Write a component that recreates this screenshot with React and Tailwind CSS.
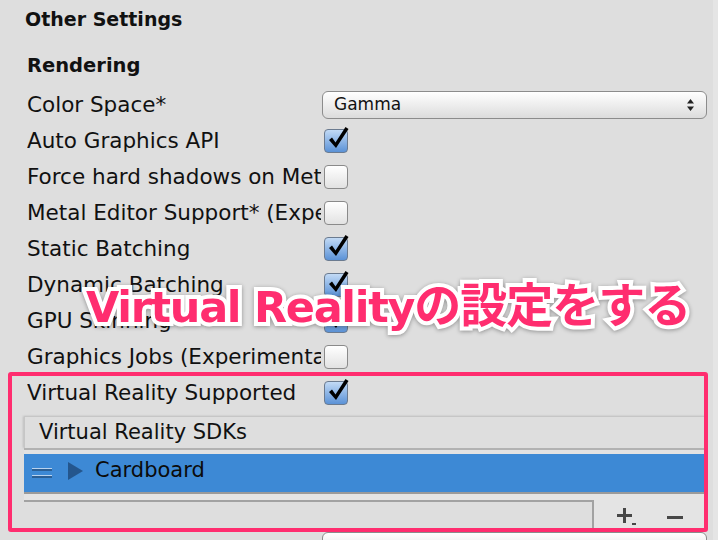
import React from 'react'

const rows = [
  { label: 'Auto Graphics API', checked: true },
  { label: 'Force hard shadows on Metal', checked: false },
  { label: 'Metal Editor Support* (Experimental)', checked: false },
  { label: 'Static Batching', checked: true },
  { label: 'Dynamic Batching', checked: true },
  { label: 'GPU Skinning', checked: true },
  { label: 'Graphics Jobs (Experimental)', checked: false },
  { label: 'Virtual Reality Supported', checked: true },
]

function Checkbox({ checked }) {
  return (
    <div className="relative ml-[3px] h-[24px] w-[24px] shrink-0">
      <div
        className={
          checked
            ? 'h-full w-full rounded-[4px] border border-[#6b7b90] bg-gradient-to-b from-[#c2daf5] to-[#5b92d6]'
            : 'h-full w-full rounded-[4px] border border-[#8a8a8a] bg-gradient-to-b from-[#ffffff] to-[#e2e2e2]'
        }
      />
      {checked && (
        <svg className="absolute -top-[3px] left-[3px]" width="22" height="24" viewBox="0 0 22 24">
          <path d="M2 14 L5 11.5 L8.5 16.5 L18.5 1 L21.5 3 L9 22 Z" fill="#000" />
        </svg>
      )}
    </div>
  )
}

function Row({ label, children }) {
  return (
    <div className="flex h-[36px] items-center pl-[27px]">
      <div className="w-[294px] shrink-0 overflow-hidden whitespace-nowrap text-[21.5px] leading-none">{label}</div>
      {children}
    </div>
  )
}

function Dropdown({ value }) {
  return (
    <div className="ml-[1px] flex h-[28px] w-[385px] shrink-0 items-center justify-between rounded-[6px] border border-[#8c8c8c] bg-gradient-to-b from-[#ffffff] to-[#dcdcdc] pl-[11px] pr-[12px] text-[17px]">
      <span>{value}</span>
      <svg width="7" height="12" viewBox="0 0 7 12">
        <path d="M3.5 0 L7 4.5 L0 4.5 Z M3.5 12 L7 7.5 L0 7.5 Z" fill="#222" />
      </svg>
    </div>
  )
}

export default function App() {
  return (
    <div className="relative h-[540px] w-[718px] overflow-hidden bg-[#dedede] font-['DejaVu_Sans',sans-serif] text-[#111]">
      <div className="flex h-full">
        <div className="w-[713px]">
          <div className="flex h-[38px] items-center pl-[25px] text-[19px] font-bold">Other Settings</div>
          <div className="mt-[11px] flex h-[34px] items-center pl-[27px] text-[19.5px] font-bold">Rendering</div>

          <div className="mt-[4px]">
            <Row label="Color Space*">
              <Dropdown value="Gamma" />
            </Row>
            {rows.map(r => (
              <Row key={r.label} label={r.label}>
                <Checkbox checked={r.checked} />
              </Row>
            ))}
          </div>

          {/* reorderable list */}
          <div className="ml-[24px] mt-[5px] w-[682px]">
            <div className="flex h-[32px] items-center border-l border-t border-[#c6c6c6] bg-[#dedede] pl-[14px] text-[21px] shadow-[-1px_0_2px_rgba(0,0,0,0.15)]">
              Virtual Reality SDKs
            </div>
            <div className="h-[2px] bg-[#b2b2b2]" />
            <div className="h-[4px] bg-[#e2e2e2]" />
            <div className="flex h-[38px] items-center bg-[#3d89d5] pb-[4px]">
              <div className="ml-[8px] mt-[4px] flex w-[20px] flex-col gap-[4px]">
                <div className="h-[3px] border-t border-[#b9d3ef] bg-[#2b5f95]" />
                <div className="h-[3px] border-t border-[#b9d3ef] bg-[#2b5f95]" />
              </div>
              <svg className="ml-[16px]" width="15" height="18" viewBox="0 0 15 18">
                <path d="M0 0 L15 9 L0 18 Z" fill="#24568d" />
              </svg>
              <span className="ml-[12px] text-[21px] text-[#0b0b0b]">Cardboard</span>
            </div>
            <div className="h-[2px] bg-[#9a9a9a]" />
            <div className="h-[6px] bg-[#e4e4e4]" />
            <div className="flex h-[28px]">
              <div className="h-full w-[570px] border-r-2 border-t-2 border-[#a2a2a2] bg-[#dedede]" />
              <div className="flex flex-1 items-start gap-[30px] bg-[#e4e4e4] pl-[23px] pt-[8px]">
                <svg width="20" height="18" viewBox="0 0 20 18">
                  <path d="M6 0 H9 V6 H15 V9 H9 V15 H6 V9 H0 V6 H6 Z M15 15 H19 V17 H15 Z" fill="#474747" />
                </svg>
                <div className="mt-[8px] h-[3px] w-[16px] bg-[#474747]" />
              </div>
            </div>
          </div>

          <div className="ml-[322px] mt-[4px] h-[28px] w-[385px] rounded-[6px] border border-[#8c8c8c] bg-gradient-to-b from-[#ffffff] to-[#dcdcdc]" />
        </div>
        <div className="flex-1 bg-[#e5e5e5]" />
      </div>

      {/* annotation frame */}
      <div className="absolute left-[8px] top-[372px] h-[160px] w-[700px] rounded-[3px] border-[4px] border-[#ff2d6f]" />

      {/* annotation caption */}
      <div className="absolute left-[86px] top-[272px] flex items-baseline whitespace-nowrap font-bold leading-[60px] text-[#ff2d6f] [-webkit-text-stroke:8px_white] [paint-order:stroke_fill] drop-shadow-[0_1px_2px_rgba(0,0,0,0.35)]">
        <span className="font-['DejaVu_Sans',sans-serif] text-[43px] tracking-[-1.3px]">Virtual Reality</span>
        <span className="font-['Noto_Sans_CJK_JP',sans-serif] text-[47px] tracking-[-1px]">の設定をする</span>
      </div>
    </div>
  )
}
